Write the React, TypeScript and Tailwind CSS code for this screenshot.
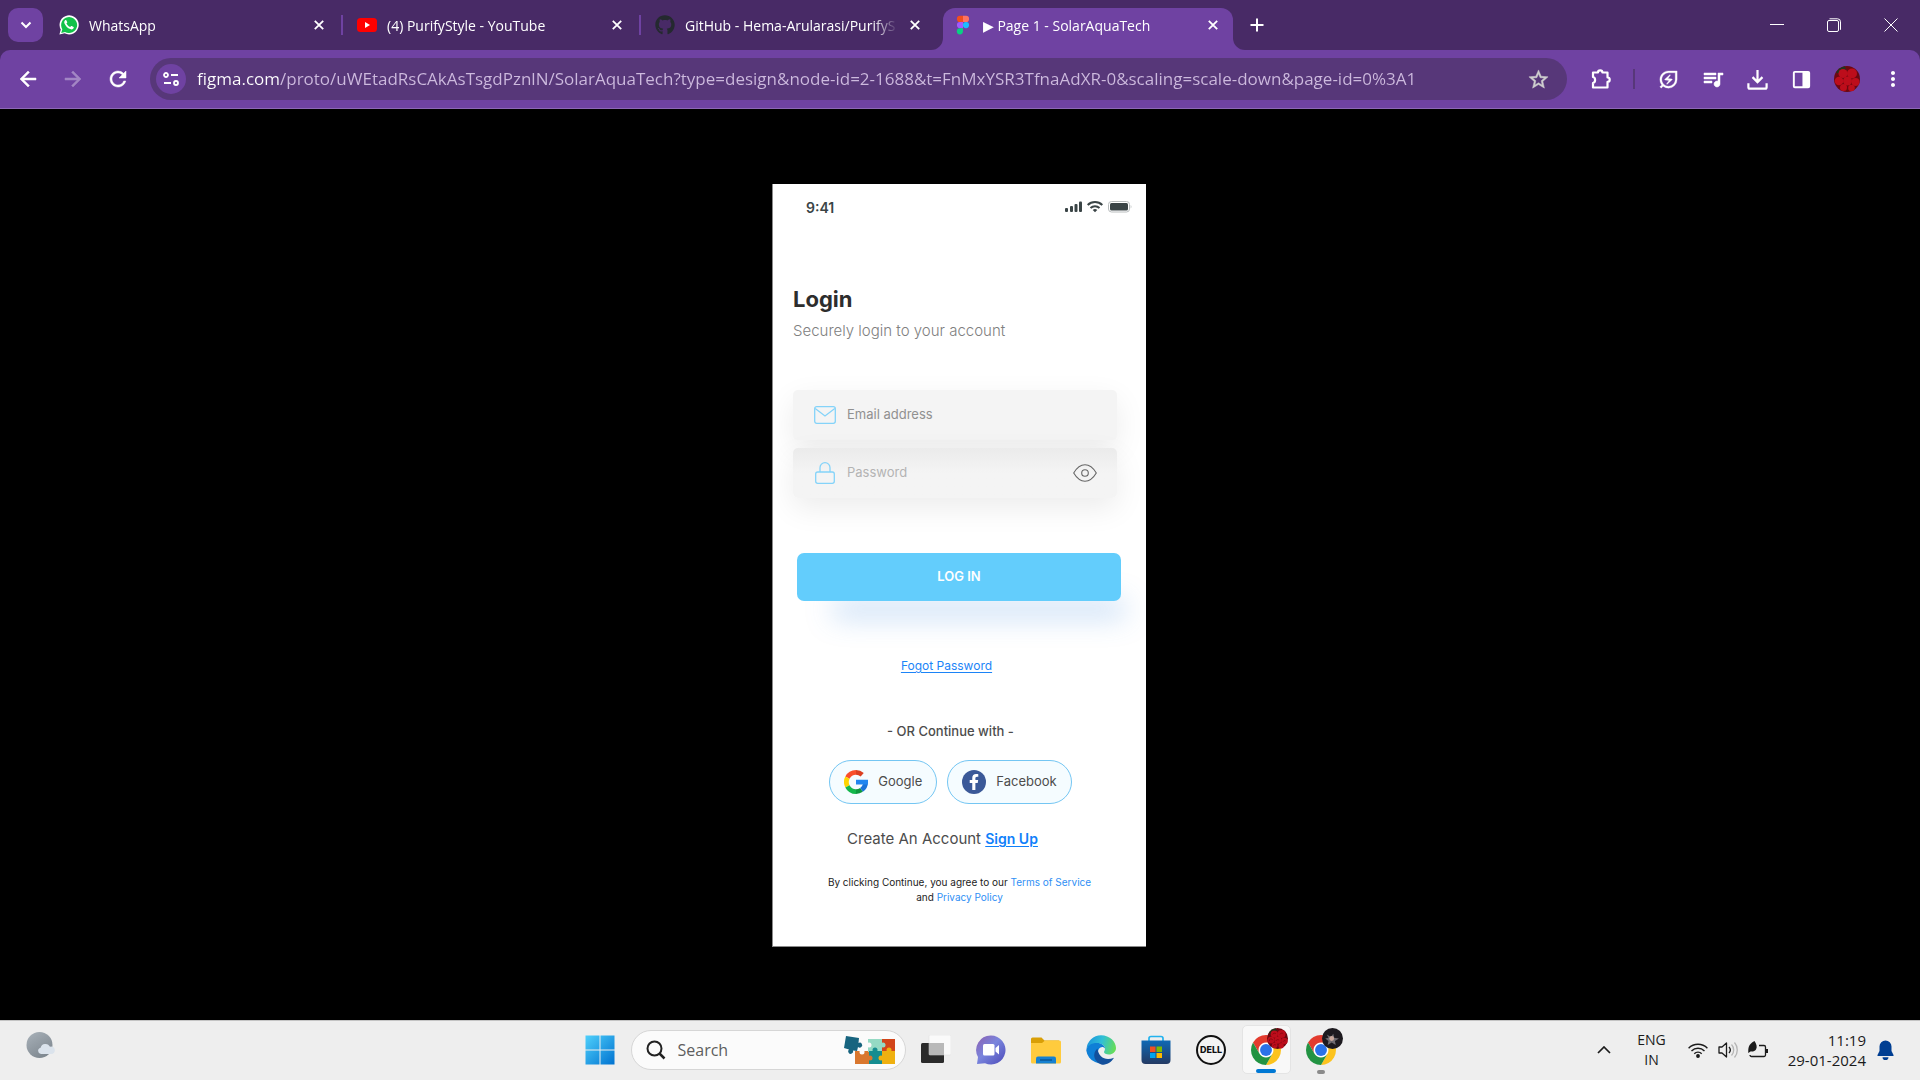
import { ReactNode, useState } from "react";
import { FaFacebookF, FaGithub } from "react-icons/fa";
import {
  MdArrowBack,
  MdArrowForward,
  MdMoreVert,
  MdOutlineEnergySavingsLeaf,
  MdQueueMusic,
  MdRefresh,
  MdStarBorder,
} from "react-icons/md";

type Tab = {
  title: string;
  icon: ReactNode;
  active?: boolean;
};

function WhatsAppIcon() {
  return (
    <svg viewBox="0 0 20 20" className="size-5">
      <path d="M0.4 19.6 1.8 14.6A9.6 9.6 0 1 1 5.6 18.3Z" fill="#fff" />
      <path d="M2.2 17.9 3.3 14.2A8 8 0 1 1 6 16.9Z" fill="#12c24a" />
      <path
        d="M7.4 5.4c-.3-.6-.9-.6-1.3-.2-.9.9-1.1 2-.6 3.2 1.2 2.7 3 4.6 5.7 5.7 1.6.6 2.9.2 3.5-1 .2-.6.2-1-.2-1.2l-1.7-.9c-.4-.2-.6-.1-.9.2l-.7.9c-1.8-.7-3-1.9-3.8-3.5l.7-.9c.2-.3.2-.5.1-.8Z"
        fill="#fff"
      />
    </svg>
  );
}

function YouTubeIcon() {
  return (
    <svg viewBox="0 0 20 20" className="size-5">
      <rect x="0" y="3" width="20" height="14" rx="3.5" fill="#f00" />
      <path d="M8 7v6l5-3Z" fill="#fff" />
    </svg>
  );
}

function FigmaIcon() {
  return (
    <svg viewBox="0 0 20 20" className="size-5">
      <path d="M10 .8H7a3.1 3.1 0 0 0 0 6.2h3Z" fill="#f24e1e" />
      <path d="M10 .8h3a3.1 3.1 0 0 1 0 6.2h-3Z" fill="#ff7262" />
      <path d="M10 7H7a3.1 3.1 0 0 0 0 6.2h3Z" fill="#a259ff" />
      <circle cx="13" cy="10.1" r="3.1" fill="#1abcfe" />
      <path d="M7 13.2h3v3.1a3.1 3.1 0 1 1-3-3.1Z" fill="#0acf83" />
    </svg>
  );
}

function CrossIcon() {
  return (
    <svg viewBox="0 0 10 10" className="size-[10px]">
      <path d="M.8.8l8.4 8.4M9.2.8.8 9.2" stroke="#fff" strokeWidth="1.8" />
    </svg>
  );
}

const tabs: Tab[] = [
  { title: "WhatsApp", icon: <WhatsAppIcon /> },
  { title: "(4) PurifyStyle - YouTube", icon: <YouTubeIcon /> },
  { title: "GitHub - Hema-Arularasi/PurifyS", icon: <FaGithub className="size-5 text-[#24292f]" /> },
  { title: "▶ Page 1 - SolarAquaTech", icon: <FigmaIcon />, active: true },
];

function BrowserTab({ tab, divider }: { tab: Tab; divider: boolean }) {
  return (
    <div className="relative flex h-[42px] w-[298px] px-1">
      <div
        className={
          tab.active
            ? "relative flex min-w-0 flex-1 items-center rounded-t-xl bg-[#6f42a2] pb-2 pl-[10px] pr-[15px]"
            : "flex min-w-0 flex-1 items-center pb-2 pl-[10px] pr-[15px]"
        }
      >
        {tab.active ? (
          <>
            <svg viewBox="0 0 12 12" className="absolute -left-3 bottom-0 size-3">
              <path d="M12 0v12H0A12 12 0 0 0 12 0Z" fill="#6f42a2" />
            </svg>
            <svg viewBox="0 0 12 12" className="absolute -right-3 bottom-0 size-3">
              <path d="M0 0v12h12A12 12 0 0 1 0 0Z" fill="#6f42a2" />
            </svg>
          </>
        ) : null}
        <button type="button" className="flex min-w-0 flex-1 items-center gap-[10px] text-left">
          <span className="shrink-0">{tab.icon}</span>
          <span className="flex-1 overflow-hidden whitespace-nowrap [mask-image:linear-gradient(90deg,#000_88%,transparent)]">
            {tab.title}
          </span>
        </button>
        <button type="button" aria-label="Close tab" className="ml-3">
          <CrossIcon />
        </button>
      </div>
      {divider ? <span className="absolute right-0 top-[7px] h-5 w-[2px] bg-[#6f42a2]" /> : null}
    </div>
  );
}

function TabStrip() {
  return (
    <div className="flex h-[50px] items-end bg-[#482a66] text-[14px] text-white">
      <div className="flex h-full w-[45px] shrink-0 items-center pl-2">
        <button
          type="button"
          aria-label="Search tabs"
          className="flex h-[34px] w-[35px] items-center justify-center rounded-[10px] bg-[#6f42a2]"
        >
          <svg viewBox="0 0 12 8" className="h-2 w-3">
            <path d="M1.5 1.5 6 6l4.5-4.5" fill="none" stroke="#fff" strokeWidth="2" />
          </svg>
        </button>
      </div>
      {tabs.map((tab, index) => (
        <BrowserTab key={tab.title} tab={tab} divider={index < 2} />
      ))}
      <button type="button" aria-label="New tab" className="mb-[18px] ml-[13px]">
        <svg viewBox="0 0 14 14" className="size-[14px]">
          <path d="M7 .5v13M.5 7h13" stroke="#fff" strokeWidth="2" />
        </svg>
      </button>
      <div className="ml-auto flex h-full w-[172px] items-center pr-px">
        <button type="button" aria-label="Minimize" className="flex flex-1 justify-center">
          <svg viewBox="0 0 14 14" className="size-[14px]">
            <path d="M0 6.500h14" stroke="#fff" />
          </svg>
        </button>
        <button type="button" aria-label="Restore" className="flex flex-1 justify-center">
          <svg viewBox="0 0 14 14" className="size-[14px]" fill="none" stroke="#fff">
            <rect x=".5" y="2.5" width="11" height="11" rx="1.5" />
            <path d="M2.5.8h8a3 3 0 0 1 3 3v8" />
          </svg>
        </button>
        <button type="button" aria-label="Close" className="flex flex-1 justify-center">
          <svg viewBox="0 0 14 14" className="size-[14px]">
            <path d="M.5.5l13 13M13.5.5l-13 13" stroke="#fff" />
          </svg>
        </button>
      </div>
    </div>
  );
}

function RoseAvatar({ className }: { className: string }) {
  return (
    <svg viewBox="0 0 26 26" className={className}>
      <circle cx="13" cy="13" r="13" fill="#6d0810" />
      <path d="M2 6.5A13 13 0 0 1 11 .2l1 4-6 4Z" fill="#22351c" />
      <g fill="#bd0d1b">
        <circle cx="9" cy="7.5" r="4.5" />
        <circle cx="18" cy="7.5" r="5" />
        <circle cx="13.5" cy="15" r="4.5" />
        <circle cx="21.5" cy="16" r="4" />
        <circle cx="5" cy="15" r="4.3" />
        <circle cx="9.5" cy="21.5" r="3.5" />
        <circle cx="17.5" cy="22" r="3.3" />
      </g>
      <path
        d="M7 8a2.5 2.5 0 0 1 4-1M16 8a2.5 2.5 0 0 1 4-1M11 16a2.5 2.5 0 0 1 4-1M20 17a2 2 0 0 1 3-1M3 16a2 2 0 0 1 4-1M8 22a2 2 0 0 1 3-1"
        fill="none"
        stroke="#84060f"
      />
    </svg>
  );
}

const pageUrl =
  "figma.com/proto/uWEtadRsCAkAsTsgdPznlN/SolarAquaTech?type=design&node-id=2-1688&t=FnMxYSR3TfnaAdXR-0&scaling=scale-down&page-id=0%3A1";

function Toolbar() {
  const [url, setUrl] = useState(pageUrl);

  return (
    <div className="bg-[#482a66]">
      <div className="flex h-[59px] items-center rounded-t-[10px] border-b border-[#8d68b6] bg-[#6f42a2] text-white [&_path[fill=none]]:stroke-none">
        <div className="flex w-[150px] shrink-0 items-center gap-[21px] pl-4">
          <button type="button" aria-label="Back">
            <MdArrowBack className="size-6 stroke-[0.5]" />
          </button>
          <button type="button" aria-label="Forward" className="text-[#a386c4]">
            <MdArrowForward className="size-6 stroke-[0.5]" />
          </button>
          <button type="button" aria-label="Reload">
            <MdRefresh className="size-6 stroke-[0.5]" />
          </button>
        </div>
        <div className="flex h-[42px] min-w-0 flex-1 items-center rounded-full bg-[#573779] pl-[6px] pr-[17px]">
          <button
            type="button"
            aria-label="View site information"
            className="flex size-[30px] shrink-0 items-center justify-center rounded-full bg-[#6f42a2]"
          >
            <svg viewBox="0 0 16 14" className="h-[14px] w-4" fill="none" stroke="#fff" strokeWidth="1.8">
              <circle cx="3" cy="3" r="2" />
              <path d="M8 3h7M1 11h7" />
              <circle cx="13" cy="11" r="2" />
            </svg>
          </button>
          <input
            type="text"
            aria-label="Address"
            value={url}
            onChange={(e) => setUrl(e.target.value)}
            className="ml-[11px] min-w-0 flex-1 bg-[linear-gradient(90deg,#fff_83px,#cdbade_83px)] bg-clip-text text-[17px] text-transparent outline-none"
          />
          <button type="button" aria-label="Bookmark this page" className="text-[#cfcfcf]">
            <MdStarBorder className="size-[23px] stroke-[0.5]" />
          </button>
        </div>
        <div className="flex w-[353px] shrink-0 items-center pl-[22px]">
          <button type="button" aria-label="Extensions">
            <svg viewBox="0 0 24 24" className="size-6" fill="none" stroke="#fff" strokeWidth="2.2" strokeLinejoin="round">
              <path d="M4 5.5h5a2.2 2.2 0 0 1 4.4 0H18.5v5a2.2 2.2 0 0 1 0 4.4V20.5H4v-4.5c2.8-.5 2.8-5.5 0-6Z" />
            </svg>
          </button>
          <span className="ml-5 h-5 w-[2px] bg-[#573779]" />
          <div className="ml-[22px] flex items-center gap-[21px]">
            <button type="button" aria-label="Energy saver">
              <MdOutlineEnergySavingsLeaf className="size-[23px] stroke-[0.3]" />
            </button>
            <button type="button" aria-label="Media controls">
              <MdQueueMusic className="size-6 stroke-[0.5]" />
            </button>
            <button type="button" aria-label="Downloads">
              <svg viewBox="0 0 24 24" className="size-[23px]" fill="none" stroke="#fff" strokeWidth="2.3">
                <path d="M12 2v12.5M6.8 9.5l5.2 5.2 5.2-5.2" />
                <path d="M2.5 16v4a1.5 1.5 0 0 0 1.5 1.5h16a1.5 1.5 0 0 0 1.5-1.5v-4" />
              </svg>
            </button>
            <button type="button" aria-label="Side panel">
              <svg viewBox="0 0 24 24" className="size-[23px]">
                <path
                  d="M5 3h14a2 2 0 0 1 2 2v14a2 2 0 0 1-2 2H5a2 2 0 0 1-2-2V5a2 2 0 0 1 2-2Zm0 2v14h8V5Z"
                  fill="#fff"
                  fillRule="evenodd"
                />
              </svg>
            </button>
            <button type="button" aria-label="Profile">
              <RoseAvatar className="size-[26px]" />
            </button>
            <button type="button" aria-label="Menu">
              <MdMoreVert className="size-6" />
            </button>
          </div>
        </div>
      </div>
    </div>
  );
}

function GoogleIcon() {
  return (
    <svg viewBox="0 0 24 24" className="size-6" fill="none" strokeWidth="4.8">
      <path d="M12 2.4a9.6 9.6 0 0 1 6.2 2.3" stroke="#db4022" />
      <path d="M3.45 7.64A9.6 9.6 0 0 1 12 2.4" stroke="#fa4f2b" />
      <path d="M3.45 16.36a9.6 9.6 0 0 1 0-8.72" stroke="#ffd400" />
      <path d="M12 21.6a9.6 9.6 0 0 1-8.55-5.24" stroke="#14b74c" />
      <path d="M17.5 19.87A9.6 9.6 0 0 1 12 21.6" stroke="#0f983e" />
      <path d="M21.6 12a9.6 9.6 0 0 1-4.1 7.87" stroke="#1a73d8" />
      <path d="M12 9.7h12v2.3l-.4 2.5H12Z" fill="#2086f0" />
    </svg>
  );
}

function StatusBar() {
  return (
    <div className="flex h-[46px] items-center justify-between pl-[33px] pr-[14px]">
      <span className="text-[14px] font-semibold text-[#3a4446]">9:41</span>
      <svg viewBox="0 0 67 14" className="h-[14px] w-[67px]" fill="#3a4446">
        <rect x="0" y="8" width="3" height="4" rx="1" />
        <rect x="5" y="6" width="3" height="6" rx="1" />
        <rect x="9.5" y="4" width="3" height="8" rx="1" />
        <rect x="14" y="1.5" width="3" height="10.5" rx="1" />
        <g fill="none" stroke="#3a4446" strokeWidth="2">
          <path d="M22.7 5a10.3 10.3 0 0 1 14.6 0" />
          <path d="M25.5 8a6.5 6.5 0 0 1 9 0" />
        </g>
        <path d="M27.7 9.9a3.5 3.5 0 0 1 4.6 0L30 12.3Z" />
        <rect x="43.5" y="1.5" width="21" height="10.5" rx="3" fill="none" stroke="#b9bdbe" />
        <rect x="45" y="3" width="18" height="7.5" rx="1.5" />
        <path d="M65.7 5v3.5c1-.3 1-3.2 0-3.5Z" fill="#b9bdbe" />
      </svg>
    </div>
  );
}

function LoginScreen() {
  const [showPassword, setShowPassword] = useState(false);

  return (
    <section className="w-[374px] overflow-hidden border-b border-l border-[#8a8a8a] bg-white pb-[41px] font-[Inter,sans-serif]">
      <StatusBar />
      <div className="pl-5 pr-[29px]">
        <h1 className="mt-[53px] text-[22px] font-bold leading-8 text-[#2d2d2d]">Login</h1>
        <p className="mt-[6px] text-[15px] font-light leading-5 text-[#808080]">Securely login to your account</p>

        <form onSubmit={(e) => e.preventDefault()}>
          <label className="mt-[49px] flex h-[50px] items-center gap-[11px] rounded-[5px] bg-[#f4f4f4] pl-[21px] pr-5 shadow-[0_10px_30px_rgba(0,0,0,0.08)]">
            <svg viewBox="0 0 22 18" className="h-[18px] w-[22px]" fill="none" stroke="#84d3f9" strokeWidth="1.3">
              <rect x=".7" y=".7" width="20.6" height="16.6" rx="2" />
              <path d="M1.2 2.5 11 10l9.8-7.5" />
            </svg>
            <input
              type="email"
              aria-label="Email address"
              placeholder="Email address"
              className="min-w-0 flex-1 bg-transparent text-[13px] outline-none placeholder:text-[#909090]"
            />
          </label>
          <div className="mt-2 flex h-[50px] items-center gap-[11px] rounded-[5px] bg-linear-to-b from-[#ebebeb] to-[#f4f4f4] to-50% pl-[21px] pr-5 shadow-[0_10px_30px_rgba(0,0,0,0.08)]">
            <svg viewBox="0 0 22 22" className="size-[22px]" fill="none" stroke="#84d3f9" strokeWidth="1.3">
              <rect x="1.7" y="10" width="18.6" height="11.3" rx="2" />
              <path d="M6 10V5.7a5 5 0 0 1 10 0V10" />
            </svg>
            <input
              type={showPassword ? "text" : "password"}
              aria-label="Password"
              placeholder="Password"
              className="min-w-0 flex-1 bg-transparent text-[13px] outline-none placeholder:text-[#b3b3b3]"
            />
            <button type="button" aria-label="Show password" onClick={() => setShowPassword(!showPassword)}>
              <svg viewBox="0 0 24 18" className="h-[18px] w-6" fill="none" stroke="#666" strokeWidth="1.1">
                <path d="M.7 9C4 3.5 7.5.8 12 .8S20 3.5 23.3 9C20 14.5 16.5 17.2 12 17.2S4 14.5.7 9Z" />
                <circle cx="12" cy="9" r="3.3" />
              </svg>
            </button>
          </div>
          <button
            type="submit"
            className="-mr-1 ml-1 mt-[55px] block h-12 w-full rounded-[7px] bg-[#63cdfc] text-[13px] font-semibold text-white shadow-[20px_32px_28px_-16px_rgba(74,144,226,0.34)]"
          >
            LOG IN
          </button>
        </form>
      </div>

      <div className="flex flex-col items-center pr-[18px] text-[#4c4c4c]">
        <a href="#forgot" className="mt-[55px] pr-2 text-[12px] leading-5 text-[#1c84f7] underline underline-offset-2">
          Fogot Password
        </a>
        <p className="mt-[45px] text-[13px] font-medium leading-5">- OR Continue with -</p>
        <div className="mt-[19px] flex gap-[10px] text-[13px]">
          <button type="button" className="flex h-11 items-center gap-[10px] rounded-full border border-[#74c6f3] bg-[#f5fcff] px-[14px]">
            <GoogleIcon />
            Google
          </button>
          <button type="button" className="flex h-11 items-center gap-[10px] rounded-full border border-[#74c6f3] bg-[#f5fcff] px-[14px]">
            <span className="flex size-6 items-end justify-center rounded-full bg-[#3b5998] pb-1 text-white">
              <FaFacebookF className="size-4" />
            </span>
            Facebook
          </button>
        </div>
        <p className="mt-[25px] pr-4 text-[15px] leading-5">
          Create An Account{" "}
          <a href="#signup" className="text-[14px] font-semibold text-[#1080fa] underline underline-offset-2">
            Sign Up
          </a>
        </p>
      </div>
      <p className="mt-[26px] text-center text-[10px] leading-[15px] text-[#1c1c1c]">
        By clicking Continue, you agree to our{" "}
        <a href="#terms" className="text-[#2f8ff5]">
          Terms of Service
        </a>
        <br />
        and{" "}
        <a href="#privacy" className="text-[#2f8ff5]">
          Privacy Policy
        </a>
      </p>
    </section>
  );
}

function WindowsIcon() {
  return (
    <svg viewBox="0 0 30 30" className="size-[30px]">
      <defs>
        <linearGradient id="win" x1="0" y1="0" x2="1" y2="1">
          <stop offset="0" stopColor="#4fd0fb" />
          <stop offset="1" stopColor="#0072d0" />
        </linearGradient>
      </defs>
      <path d="M.5.5h14v14H.5ZM15.5.5h14v14h-14ZM.5 15.5h14v14H.5ZM15.5 15.5h14v14h-14Z" fill="url(#win)" />
    </svg>
  );
}

function PuzzleArt() {
  return (
    <svg viewBox="0 0 52 30" className="h-[30px] w-[52px]">
      <path d="M2 1l13 2-.5 5a2.5 2.5 0 1 1-.5 4l-1 4-4-.5a2.5 2.5 0 1 1-4-1L0 13Z" fill="#17647f" />
      <path d="M11 16h14v13H11Z" fill="#d9772e" />
      <circle cx="18" cy="17" r="2.5" fill="#fbfbfb" />
      <path d="M24 4h14v13H24Z" fill="#95dac4" />
      <circle cx="25" cy="10" r="2.5" fill="#fbfbfb" />
      <path d="M38 4h13v13H38Z" fill="#d2451a" />
      <path d="M25 16h13v13H25Z" fill="#158d90" />
      <path d="M38 16h13v13H38Z" fill="#efb010" />
      <circle cx="39" cy="10" r="2.5" fill="#95dac4" />
      <circle cx="31" cy="15" r="2.5" fill="#158d90" />
      <circle cx="45" cy="15" r="2.5" fill="#efb010" />
      <circle cx="37" cy="23" r="2.5" fill="#efb010" />
      <circle cx="26" cy="23" r="2.5" fill="#d9772e" />
    </svg>
  );
}

function TaskViewIcon() {
  return (
    <svg viewBox="0 0 30 30" className="size-[30px]">
      <rect x="0" y="8" width="23" height="20" rx="1.5" fill="#2b2b2b" />
      <rect x="8" y="0" width="22" height="20" rx="1" fill="#fafafa" stroke="#ddd" strokeWidth=".5" />
      <rect x="8" y="8" width="15" height="12" fill="#b9b9b9" />
    </svg>
  );
}

function ChatIcon() {
  return (
    <svg viewBox="0 0 30 30" className="size-[30px]">
      <defs>
        <linearGradient id="chat" x1="0" y1="0" x2="1" y2="1">
          <stop offset="0" stopColor="#8d5fb0" />
          <stop offset=".45" stopColor="#7a85dd" />
          <stop offset="1" stopColor="#4b49b8" />
        </linearGradient>
      </defs>
      <path d="M15 .5a14.5 14.5 0 1 1-6 27.7L1 29l1-7A14.5 14.5 0 0 1 15 .5Z" fill="url(#chat)" />
      <rect x="7" y="9" width="11.5" height="11.5" rx="1.5" fill="#fff" />
      <path d="M19.5 13l3.5-3v9.5l-3.5-3Z" fill="#fff" />
    </svg>
  );
}

function FolderIcon() {
  return (
    <svg viewBox="0 0 30 30" className="size-[30px]">
      <path d="M1.5 2.5h9l3 3H28v8H0V4a1.5 1.5 0 0 1 1.5-1.5Z" fill="#d99f07" />
      <path d="M0 8h11l3-2.5h14.5A1.5 1.5 0 0 1 30 7v20a1.5 1.5 0 0 1-1.5 1.5h-27A1.5 1.5 0 0 1 0 27Z" fill="#ffcb3d" />
      <path d="M7 21.5h16a2 2 0 0 1 2 2v5H5v-5a2 2 0 0 1 2-2Z" fill="#1681d1" />
      <path d="M9 25h12" stroke="#0b5796" strokeWidth="1.5" />
    </svg>
  );
}

function EdgeIcon() {
  return (
    <svg viewBox="0 0 30 30" className="size-[30px]">
      <defs>
        <linearGradient id="edgeTop" x1="0" y1=".3" x2="1" y2=".5">
          <stop offset="0" stopColor="#1a93dc" />
          <stop offset=".5" stopColor="#30bfd6" />
          <stop offset="1" stopColor="#66dd58" />
        </linearGradient>
      </defs>
      <path
        d="M.5 14A14.7 14.7 0 0 1 15 .3C24 .3 30 7 30 13c0 4-3.5 6.5-7 6.5-3 0-5-1-5-2.5 0-.7 1-1.5 1-3.5 0-2.5-2.5-5-6.5-5C6 8.5 1 11.5.5 14Z"
        fill="url(#edgeTop)"
      />
      <path
        d="M.3 15.5C.5 10.5 5.5 8 11 8c4.5 0 8 2.5 8 5.5-1-1.5-3-2-4.5-1-2.5 1.5-3.5 5-1 9 2 3.5 6 5 10 4A14.7 14.7 0 0 1 .3 15.5Z"
        fill="#0f7fd6"
      />
      <path
        d="M11.5 13.5c-3.5 3-4.5 8-1.5 12 1.5 2.2 3.5 3.5 6 4.2 5 0 9.5-2.5 12-7-8 3.5-15.500 0-16.5-9.2Z"
        fill="#13509c"
      />
    </svg>
  );
}

function StoreIcon() {
  return (
    <svg viewBox="0 0 30 30" className="size-[30px]">
      <defs>
        <linearGradient id="store" x1="0" y1="0" x2="0" y2="1">
          <stop offset="0" stopColor="#0f69b5" />
          <stop offset="1" stopColor="#243a63" />
        </linearGradient>
      </defs>
      <path d="M8 6V3.5A2 2 0 0 1 10 1.5h10a2 2 0 0 1 2 2V6" fill="none" stroke="#22b2ee" strokeWidth="1.7" />
      <path d="M.5 5.5h29V25a4 4 0 0 1-4 4h-21a4 4 0 0 1-4-4Z" fill="url(#store)" />
      <path d="M9 11.5h5.5V17H9Z" fill="#f25022" />
      <path d="M15.5 11.5H21V17h-5.5Z" fill="#7fba00" />
      <path d="M9 18h5.5v5H9Z" fill="#00a4ef" />
      <path d="M15.5 18H21v5h-5.5Z" fill="#ffb900" />
    </svg>
  );
}

function DellIcon() {
  return (
    <svg viewBox="0 0 30 30" className="size-[30px]">
      <circle cx="15" cy="15" r="14" fill="#f4f4f4" stroke="#111" strokeWidth="2" />
      <text x="15" y="18" textAnchor="middle" fontSize="9" fontWeight="800" fill="#111" fontFamily="Inter, sans-serif">
        DELL
      </text>
    </svg>
  );
}

function ChromeIcon() {
  return (
    <svg viewBox="0 0 48 48" className="size-[30px]">
      <circle cx="24" cy="24" r="12" fill="#fff" />
      <path d="M24 12H44.78a24 24 0 0 0-41.56 0L13.61 30A12 12 0 0 1 24 12Z" fill="#e33b2e" />
      <path d="M34.39 30 24 48A24 24 0 0 0 44.78 12H24a12 12 0 0 1 10.39 18Z" fill="#fcc31e" />
      <path d="M13.61 30 3.22 12A24 24 0 0 0 24 48L34.39 30a12 12 0 0 1-20.78 0Z" fill="#229342" />
      <circle cx="24" cy="24" r="9.5" fill="#2a72e8" />
    </svg>
  );
}

function DarkAvatar({ className }: { className: string }) {
  return (
    <svg viewBox="0 0 26 26" className={className}>
      <circle cx="13" cy="13" r="13" fill="#1d1a1f" />
      <path d="M6 8l5 3 3-4 1 5 6 1-5 3 1 5-5-3-5 3 1-5-4-3 4-1Z" fill="#6e6a70" />
      <circle cx="12" cy="13" r="3" fill="#c9a89c" />
    </svg>
  );
}

function WeatherIcon() {
  return (
    <svg viewBox="0 0 30 28" className="h-7 w-[30px]">
      <defs>
        <linearGradient id="moon" x1="0" y1="0" x2=".6" y2="1">
          <stop offset="0" stopColor="#a9b2ba" />
          <stop offset="1" stopColor="#7f8890" />
        </linearGradient>
      </defs>
      <circle cx="13.5" cy="14" r="13" fill="url(#moon)" />
      <path d="M15 23a3.2 3.2 0 0 1-.4-6.3 5 5 0 0 1 9.4-.9 3.7 3.7 0 1 1 1.2 7.2Z" fill="#dbe3ec" />
    </svg>
  );
}

const pinnedApps = [
  { name: "Task view", icon: <TaskViewIcon /> },
  { name: "Chat", icon: <ChatIcon /> },
  { name: "File Explorer", icon: <FolderIcon /> },
  { name: "Microsoft Edge", icon: <EdgeIcon /> },
  { name: "Microsoft Store", icon: <StoreIcon /> },
  { name: "Dell", icon: <DellIcon /> },
];

function Taskbar() {
  return (
    <footer className="flex h-[60px] items-center border-t border-[#c4c4c4] bg-[#eee] pb-[2px] text-[15px] text-[#1b1b1b]">
      <div className="flex flex-1 pb-[10px] pl-[26px]">
        <button type="button" aria-label="Weather">
          <WeatherIcon />
        </button>
      </div>

      <div className="flex items-center pl-[13px]">
        <button type="button" aria-label="Start">
          <WindowsIcon />
        </button>
        <label className="ml-4 mr-[3px] flex h-10 w-[275px] items-center rounded-full border border-[#d6d6d6] bg-[#fbfbfb] pl-[14px] pr-[9px]">
          <svg viewBox="0 0 20 20" className="size-5 shrink-0" fill="none" stroke="#222" strokeWidth="2">
            <circle cx="8.5" cy="8.5" r="7" />
            <path d="M13.5 13.5l5 5" strokeWidth="2.5" />
          </svg>
          <input
            type="search"
            aria-label="Search"
            placeholder="Search"
            className="ml-3 min-w-0 flex-1 bg-transparent text-[16px] outline-none placeholder:text-[#5e5e5e]"
          />
          <PuzzleArt />
        </label>
        {pinnedApps.map((app) => (
          <button key={app.name} type="button" aria-label={app.name} className="flex w-[55px] justify-center">
            {app.icon}
          </button>
        ))}
        <button
          type="button"
          aria-label="Google Chrome"
          className="relative mx-[3px] flex h-[49px] w-[49px] items-center justify-center rounded-[5px] border border-[#e4e4e4] bg-[#f8f8f8]"
        >
          <ChromeIcon />
          <RoseAvatar className="absolute right-[2px] top-[2px] size-[21px]" />
          <span className="absolute bottom-0 h-1 w-5 rounded-full bg-[#0078d4]" />
        </button>
        <button
          type="button"
          aria-label="Google Chrome, second profile"
          className="relative flex h-[49px] w-[55px] items-center justify-center"
        >
          <ChromeIcon />
          <DarkAvatar className="absolute right-[6px] top-[3px] size-[21px]" />
          <span className="absolute bottom-0 h-1 w-2 rounded-full bg-[#8a8a8a]" />
        </button>
      </div>

      <div className="flex flex-1 items-center justify-end pr-[26px]">
        <button type="button" aria-label="Show hidden icons">
          <svg viewBox="0 0 14 8" className="h-2 w-[14px]">
            <path d="M1 7l6-6 6 6" fill="none" stroke="#1b1b1b" strokeWidth="1.7" />
          </svg>
        </button>
        <button type="button" className="ml-[26px] text-center text-[14px] leading-5">
          ENG
          <br />
          IN
        </button>
        <button type="button" aria-label="Network, volume and battery" className="ml-[22px] flex items-center gap-[10px]">
          <svg viewBox="0 0 20 16" className="h-4 w-5" fill="none" stroke="#1b1b1b" strokeWidth="1.4">
            <path d="M.6 6.2a13.3 13.3 0 0 1 18.8 0M3.5 9a9.2 9.2 0 0 1 13 0M6.3 11.7a5.2 5.2 0 0 1 7.4 0" />
            <circle cx="10" cy="14" r="1.2" fill="#1b1b1b" />
          </svg>
          <svg viewBox="0 0 20 18" className="h-[18px] w-5" fill="none" stroke="#1b1b1b" strokeWidth="1.3">
            <path d="M1 6h3l4.5-4v14L4 12H1Z" strokeLinejoin="round" />
            <path d="M11 6a4.5 4.5 0 0 1 0 6" />
            <path d="M13.5 3.5a8 8 0 0 1 0 11M16.5 1.5a11.5 11.5 0 0 1 0 15" stroke="#b5b5b5" />
          </svg>
          <svg viewBox="0 0 20 18" className="h-[18px] w-5" fill="none" stroke="#1b1b1b" strokeWidth="1.3">
            <path d="M11 4.5h5a1.5 1.5 0 0 1 1.5 1.5v8a1.5 1.5 0 0 1-1.5 1.5H3.5a1.5 1.5 0 0 1-1.5-1.5" />
            <path d="M18 8h2v4h-2Z" fill="#1b1b1b" stroke="none" />
            <path d="M6.5 0C8.5 3 9.5 6 8 8.5 6.5 10.5 4 10.8 3 10.3L.3 12C.3 7 0 3.5 6.5 0Z" fill="#1b1b1b" stroke="none" />
          </svg>
        </button>
        <button type="button" className="ml-5 text-right leading-5">
          11:19
          <br />
          29-01-2024
        </button>
        <button type="button" aria-label="Notifications" className="ml-[11px]">
          <svg viewBox="0 0 17 20" className="h-5 w-[17px]" fill="#003e92">
            <path d="M8.5.5A6 6 0 0 1 14.5 6.5V11l2 4v1H.5v-1l2-4V6.5A6 6 0 0 1 8.5.5Z" />
            <path d="M5.5 17.2h6a3 3 0 0 1-6 0Z" />
          </svg>
        </button>
      </div>
    </footer>
  );
}

export default function App() {
  return (
    <div className="flex min-h-screen flex-col bg-black font-['Open_Sans','DejaVu_Sans',sans-serif]">
      <header>
        <TabStrip />
        <Toolbar />
      </header>
      <main className="flex flex-1 items-center justify-center pr-[2px] pt-[2px]">
        <LoginScreen />
      </main>
      <Taskbar />
    </div>
  );
}
